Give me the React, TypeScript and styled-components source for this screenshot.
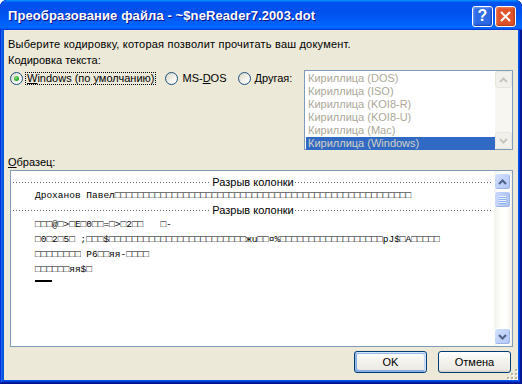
import React from 'react';
import styled, { createGlobalStyle } from 'styled-components';

const GlobalStyle = createGlobalStyle`
	html, body {
		margin: 0;
		padding: 0;
		background: #ffffff;
	}
	body {
		font-family: "Liberation Sans", "DejaVu Sans", sans-serif;
		font-size: 11px;
		color: #000;
	}
`;

const Window = styled.div`
	width: 522px;
	height: 384px;
	box-sizing: border-box;
	display: flex;
	flex-direction: column;
	padding: 0 4px 4px;
	border-radius: 7px 7px 0 0;
	overflow: hidden;
	background: #0054e3;
	box-shadow: inset -1px -1px #00138c, inset 1px 1px #0831d9, inset -2px -2px #001ea0,
		inset 2px 2px #166aee, inset -3px -3px #003bda, inset 3px 3px #0855dd;
`;

const TitleBar = styled.div`
	height: 30px;
	margin: 0 -4px;
	padding: 0 6px 0 8px;
	display: flex;
	align-items: center;
	justify-content: space-between;
	background: linear-gradient(
		180deg,
		#0997ff,
		#0053ee 8%,
		#0050ee 40%,
		#0066ff 88%,
		#0066ff 93%,
		#005bff 95%,
		#003dd7 96%,
		#003dd7
	);
	border-radius: 7px 7px 0 0;
`;

const Title = styled.span`
	font-family: "Liberation Sans", "DejaVu Sans", sans-serif;
	font-weight: bold;
	font-size: 13px;
	color: #fff;
	text-shadow: 1px 1px #0f1089;
	letter-spacing: 0.1px;
`;

const Controls = styled.div`
	display: flex;
	gap: 2px;
	margin-top: 2px;
`;

const CaptionButton = styled.div<{ $close?: boolean }>`
	width: 21px;
	height: 21px;
	box-sizing: border-box;
	border: 1px solid #fff;
	border-radius: 3px;
	display: flex;
	align-items: center;
	justify-content: center;
	color: #fff;
	font-weight: bold;
	font-size: 16px;
	font-family: "Liberation Sans", sans-serif;
	background: ${(p) => (p.$close ? '#e0532b' : '#2f6ae6')};
	box-shadow: ${(p) =>
		p.$close
			? 'inset -1px -1px 2px #b23a14, inset 1px 1px 2px #f08a66'
			: 'inset -1px -1px 2px #1443b8, inset 1px 1px 2px #7aa4f7'};
`;

const Client = styled.div`
	flex: 1;
	position: relative;
	display: flex;
	flex-direction: column;
	padding: 7px 5px 0 4px;
	background: #ece9d8;
`;

const Line = styled.div`
	line-height: 14px;
	height: 14px;
	white-space: nowrap;
`;

const Intro = styled(Line)`
	letter-spacing: 0.2px;
`;

const Caption = styled(Line)<{ $gap?: number }>`
	margin-top: ${(p) => p.$gap ?? 2}px;
`;

const EncodingRow = styled.div`
	display: flex;
	justify-content: space-between;
	align-items: flex-start;
	margin-top: 3px;
	padding-left: 2px;
`;

const RadioGroup = styled.div`
	display: flex;
	align-items: center;
	gap: 9px;
	margin-top: 2px;
`;

const RadioOption = styled.label`
	display: flex;
	align-items: center;
	gap: 2px;
	height: 13px;
`;

const RadioCircle = styled.span<{ $checked?: boolean }>`
	width: 13px;
	height: 13px;
	box-sizing: border-box;
	border-radius: 50%;
	border: 1px solid #1c5180;
	background: linear-gradient(135deg, #dcd9c5 0%, #f4f3ee 60%, #ffffff 100%);
	display: flex;
	align-items: center;
	justify-content: center;

	&::after {
		content: '';
		display: ${(p) => (p.$checked ? 'block' : 'none')};
		width: 5px;
		height: 5px;
		border-radius: 50%;
		background: radial-gradient(circle at 40% 35%, #7be27b 0%, #2fa92f 60%, #1c861c 100%);
	}
`;

const RadioLabel = styled.span<{ $focused?: boolean }>`
	line-height: 11px;
	padding: 0 1px;
	border: 1px dotted ${(p) => (p.$focused ? '#000' : 'transparent')};
	white-space: nowrap;
`;

const ListBox = styled.div`
	width: 209px;
	height: 80px;
	box-sizing: border-box;
	border: 1px solid #7f9db9;
	background: #fff;
	display: flex;
`;

const ListItems = styled.div`
	flex: 1;
	padding-top: 1px;
	padding-left: 1px;
`;

const ListItem = styled.div<{ $selected?: boolean }>`
	height: 13px;
	line-height: 13px;
	padding-left: 2px;
	white-space: nowrap;
	color: ${(p) => (p.$selected ? '#d4d0c3' : '#aca899')};
	background: ${(p) => (p.$selected ? '#316ac5' : 'transparent')};
`;

const ScrollBar = styled.div<{ $disabled?: boolean }>`
	width: 17px;
	display: flex;
	flex-direction: column;
	background: ${(p) =>
		p.$disabled ? '#f7f6f1' : 'linear-gradient(90deg, #f3f1ec, #fefefb 40%, #fefefb 70%, #f0eee6)'};
`;

const ScrollButton = styled.div<{ $disabled?: boolean }>`
	width: 17px;
	height: 17px;
	box-sizing: border-box;
	border: 1px solid ${(p) => (p.$disabled ? '#e8e6dc' : '#ffffff')};
	border-radius: 3px;
	display: flex;
	align-items: center;
	justify-content: center;
	background: ${(p) =>
		p.$disabled ? '#f1f0ea' : 'linear-gradient(135deg, #d6e4fd 0%, #c1d3fb 45%, #b4c8f6 100%)'};
	box-shadow: ${(p) => (p.$disabled ? 'none' : 'inset -1px -1px #9cb4ea')};
`;

const ScrollTrack = styled.div`
	flex: 1;
	display: flex;
	flex-direction: column;
`;

const ScrollThumb = styled.div`
	height: 17px;
	margin-top: 1px;
	box-sizing: border-box;
	border: 1px solid #fff;
	border-radius: 3px;
	background: linear-gradient(90deg, #c9d9fc 0%, #bbcefa 50%, #aec4f6 100%);
	box-shadow: inset -1px -1px #9cb4ea;
	display: flex;
	flex-direction: column;
	align-items: center;
	justify-content: center;
	gap: 1px;

	span {
		width: 7px;
		height: 1px;
		background: #eef4fe;
		box-shadow: 0 1px #8cb0f8;
	}
`;

const Preview = styled.div`
	margin-top: 1px;
	margin-left: 2px;
	height: 177px;
	box-sizing: border-box;
	border: 1px solid #7f9db9;
	background: #fff;
	display: flex;
`;

const PreviewScroll = styled(ScrollBar)`
	padding: 2px 1px 1px 0;
	box-sizing: content-box;
`;

const PreviewBody = styled.div`
	flex: 1;
	padding: 4px 1px 0 2px;
	display: flex;
	flex-direction: column;
`;

const BreakRow = styled.div`
	height: 14px;
	display: flex;
	align-items: center;
	gap: 1px;
`;

const Dots = styled.span`
	flex: 1;
	height: 1px;
	background-image: repeating-linear-gradient(90deg, #666 0 1px, transparent 1px 3px);
`;

const BreakLabel = styled.span`
	line-height: 14px;
	white-space: nowrap;
`;

const MonoLine = styled.div<{ $height?: number }>`
	height: ${(p) => p.$height ?? 15}px;
	line-height: ${(p) => p.$height ?? 15}px;
	padding-left: 22px;
	font-family: "Liberation Mono", "DejaVu Sans Mono", monospace;
	font-size: 9.5px;
	white-space: pre;
`;

const Cursor = styled.div`
	width: 17px;
	height: 2px;
	margin: 3px 0 0 22px;
	background: #000;
`;

const ButtonRow = styled.div`
	display: flex;
	justify-content: flex-end;
	gap: 11px;
	margin-top: 4px;
	padding-right: 2px;
`;

const Button = styled.button<{ $default?: boolean }>`
	width: 73px;
	height: 22px;
	padding: 0;
	font-family: "Liberation Sans", "DejaVu Sans", sans-serif;
	font-size: 11px;
	color: #000;
	border: 1px solid #003c74;
	border-radius: 3px;
	background: linear-gradient(180deg, #ffffff, #f4f3ee 40%, #ecebe6 86%, #d6d0c5);
	box-shadow: ${(p) =>
		p.$default
			? 'inset -1px 1px #cee7ff, inset 1px 2px #98b8ea, inset -2px 2px #bcd4f6, inset 1px -1px #89ade4, inset 2px -2px #89ade4'
			: 'none'};
`;

const Grip = styled.svg`
	position: absolute;
	right: 0;
	bottom: 0;
`;

function Chevron({ up, color }: { up?: boolean; color: string }) {
	return (
		<svg width="9" height="6" viewBox="0 0 9 6">
			<path
				d={up ? 'M1 5 L4.5 1.5 L8 5' : 'M1 1 L4.5 4.5 L8 1'}
				fill="none"
				stroke={color}
				strokeWidth="2"
			/>
		</svg>
	);
}

const encodings = [
	'Кириллица (DOS)',
	'Кириллица (ISO)',
	'Кириллица (KOI8-R)',
	'Кириллица (KOI8-U)',
	'Кириллица (Mac)',
	'Кириллица (Windows)'
];

const box = (n: number) => '□'.repeat(n);

const sampleLines = [
	`□□□@□>□E□0□□=□>□2□□   □-`,
	`□0□2□5□ ;□□□$${box(24)}жu□□¤%${box(18)}pJ$□A□□□□□`,
	`${box(8)} P6□□яя-□□□□`,
	`${box(6)}яя$□`
];

function App() {
	return (
		<>
			<GlobalStyle />
			<Window>
				<TitleBar>
					<Title>Преобразование файла - ~$neReader7.2003.dot</Title>
					<Controls>
						<CaptionButton>?</CaptionButton>
						<CaptionButton $close>
							<svg width="11" height="11" viewBox="0 0 11 11">
								<path d="M1 1 L10 10 M10 1 L1 10" stroke="#fff" strokeWidth="2" />
							</svg>
						</CaptionButton>
					</Controls>
				</TitleBar>
				<Client>
					<Intro>Выберите кодировку, которая позволит прочитать ваш документ.</Intro>
					<Caption>Кодировка текста:</Caption>
					<EncodingRow>
						<RadioGroup>
							<RadioOption>
								<RadioCircle $checked />
								<RadioLabel $focused>
									<u>W</u>indows (по умолчанию)
								</RadioLabel>
							</RadioOption>
							<RadioOption>
								<RadioCircle />
								<RadioLabel>
									MS-<u>D</u>OS
								</RadioLabel>
							</RadioOption>
							<RadioOption>
								<RadioCircle />
								<RadioLabel>
									<u>Д</u>ругая:
								</RadioLabel>
							</RadioOption>
						</RadioGroup>
						<ListBox>
							<ListItems>
								{encodings.map((name, i) => (
									<ListItem key={name} $selected={i === encodings.length - 1}>
										{name}
									</ListItem>
								))}
							</ListItems>
							<ScrollBar $disabled>
								<ScrollButton $disabled>
									<Chevron up color="#c9c7ba" />
								</ScrollButton>
								<ScrollTrack />
								<ScrollButton $disabled>
									<Chevron color="#c9c7ba" />
								</ScrollButton>
							</ScrollBar>
						</ListBox>
					</EncodingRow>
					<Caption $gap={5}>
						<u>О</u>бразец:
					</Caption>
					<Preview>
						<PreviewBody>
							<BreakRow>
								<Dots />
								<BreakLabel>Разрыв колонки</BreakLabel>
								<Dots />
							</BreakRow>
							<MonoLine $height={14}>Дроханов Павел{box(52)}</MonoLine>
							<BreakRow>
								<Dots />
								<BreakLabel>Разрыв колонки</BreakLabel>
								<Dots />
							</BreakRow>
							{sampleLines.map((text, i) => (
								<MonoLine key={i}>{text}</MonoLine>
							))}
							<Cursor />
						</PreviewBody>
						<PreviewScroll>
							<ScrollButton>
								<Chevron up color="#4d6185" />
							</ScrollButton>
							<ScrollTrack>
								<ScrollThumb>
									<span />
									<span />
									<span />
									<span />
								</ScrollThumb>
							</ScrollTrack>
							<ScrollButton>
								<Chevron color="#4d6185" />
							</ScrollButton>
						</PreviewScroll>
					</Preview>
					<ButtonRow>
						<Button $default>OK</Button>
						<Button>Отмена</Button>
					</ButtonRow>
					<Grip width="12" height="12" viewBox="0 0 12 12">
						{[
							[9, 1],
							[9, 5],
							[5, 5],
							[9, 9],
							[5, 9],
							[1, 9]
						].map(([x, y]) => (
							<g key={`${x}-${y}`}>
								<rect x={x + 1} y={y + 1} width="2" height="2" fill="#fff" />
								<rect x={x} y={y} width="2" height="2" fill="#b8b4a2" />
							</g>
						))}
					</Grip>
				</Client>
			</Window>
		</>
	);
}

export default App;
